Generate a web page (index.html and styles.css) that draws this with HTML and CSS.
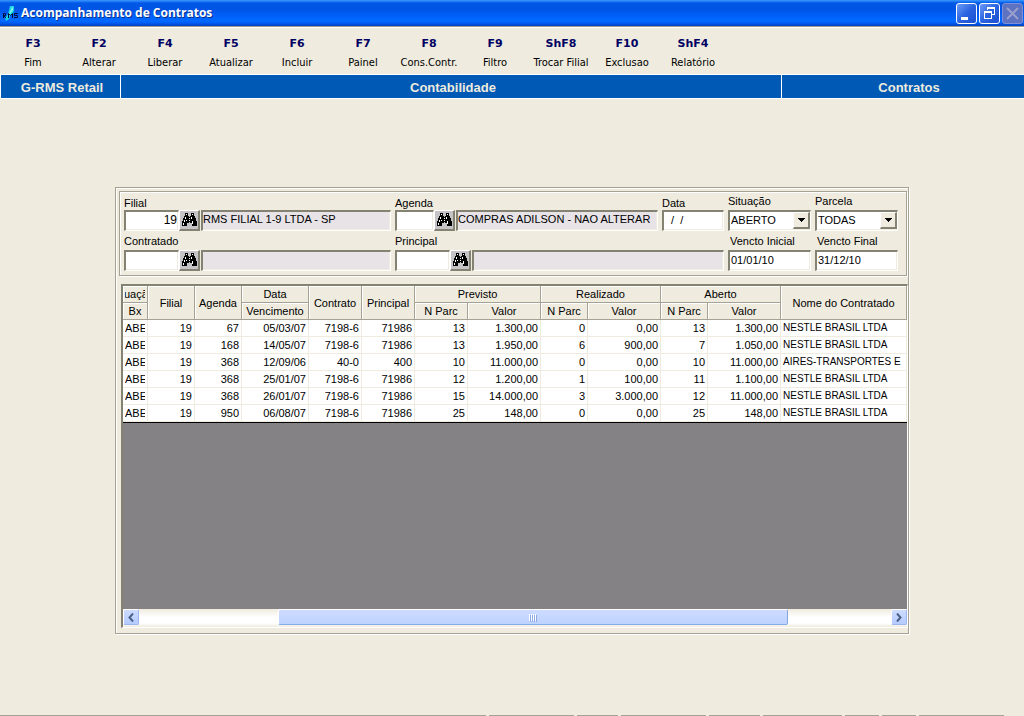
FILE: index.html
```html
<!DOCTYPE html>
<html lang="pt-BR">
<head>
<meta charset="utf-8">
<title>Acompanhamento de Contratos</title>
<link rel="stylesheet" href="styles.css">
</head>
<body>
<svg class="defs" aria-hidden="true">
  <symbol id="find" viewBox="0 0 16 14">
    <path fill="#000" d="M4 0h3v3h1v1h1V3h1V0h3v3h1v2h1v3h1v5h-5v-3H9V9H8v1H6v3H1V8h1V5h1V3h1z"/>
    <path fill="#fff" d="M5 1h1v1H5zM11 1h1v1h-1zM4 4h1v2H4zM10 4h1v2h-1zM3 7h1v2H3zM8 5h1v1H8zM11 8h1v3h-1zM2 10h1v2H2zM5 7h1v1H5zM8 7h1v1H8z"/>
  </symbol>
  <symbol id="drop" viewBox="0 0 7 4"><path d="M0 0h7v1H6v1H5v1H4v1H3V3H2V2H1V1H0z"/></symbol>
</svg>

<header class="titlebar">
  <svg class="logo" viewBox="0 0 17 15" aria-hidden="true">
    <path fill="#19d3e0" d="M8 0h4v4l-1 4-3 2-1 3-3 2-1-3 3-4z"/>
    <path fill="#7df3ee" d="M10 1h1v3L8 8H7z"/>
    <path fill="none" stroke="#001040" d="M1.500 12V7.500h2v2h-2l2.500 2.500M6.500 12V7.500l2 2 2-2V12M16 7.500h-3.500v2h3v2H12"/>
  </svg>
  <h1 class="title">Acompanhamento de Contratos</h1>
  <button class="win" aria-label="Minimizar"><svg viewBox="0 0 19 19"><path fill="#fff" d="M4 13h7v3H4z"/></svg></button>
  <button class="win" aria-label="Restaurar"><svg viewBox="0 0 19 19"><path fill="#fff" d="M7 3h8v8h-3v-1h2V5H8v1H7zM4 7h8v8H4zM5 9v5h6V9z" fill-rule="evenodd"/></svg></button>
  <button class="win off" aria-label="Fechar" disabled><svg viewBox="0 0 19 19"><path stroke="#9a9fcb" stroke-width="2" d="M4 4l11 11M15 4L4 15"/></svg></button>
</header>

<nav class="toolbar">
  <button class="tool"><b>F3</b><span>Fim</span></button>
  <button class="tool"><b>F2</b><span>Alterar</span></button>
  <button class="tool"><b>F4</b><span>Liberar</span></button>
  <button class="tool"><b>F5</b><span>Atualizar</span></button>
  <button class="tool"><b>F6</b><span>Incluir</span></button>
  <button class="tool"><b>F7</b><span>Painel</span></button>
  <button class="tool"><b>F8</b><span>Cons.Contr.</span></button>
  <button class="tool"><b>F9</b><span>Filtro</span></button>
  <button class="tool"><b>ShF8</b><span>Trocar Filial</span></button>
  <button class="tool"><b>F10</b><span>Exclusao</span></button>
  <button class="tool"><b>ShF4</b><span>Relatório</span></button>
</nav>

<div class="band">
  <div class="band-cell">G-RMS Retail</div>
  <div class="band-cell">Contabilidade</div>
  <div class="band-cell">Contratos</div>
</div>

<main class="main">
  <section class="panel">
    <form class="filter">
      <div class="field">
        <label for="filial">Filial</label>
        <div class="line"><input class="box code num" id="filial" value="19"><button type="button" class="find" aria-label="Buscar filial"><svg><use href="#find"/></svg></button><input class="box name" value="RMS FILIAL 1-9 LTDA - SP" aria-label="Nome da filial" readonly></div>
      </div>
      <div class="field">
        <label for="agenda">Agenda</label>
        <div class="line"><input class="box short" id="agenda"><button type="button" class="find" aria-label="Buscar agenda"><svg><use href="#find"/></svg></button><input class="box name" value="COMPRAS ADILSON - NAO ALTERAR" aria-label="Nome da agenda" readonly></div>
      </div>
      <div class="field">
        <label for="data">Data</label>
        <div class="line"><input class="box date" id="data" value="  /  /"></div>
      </div>
      <div class="field">
        <label class="high" for="situacao">Situação</label>
        <div class="line combo"><select class="box" id="situacao"><option>ABERTO</option></select><span class="arrow"><svg><use href="#drop"/></svg></span></div>
      </div>
      <div class="field">
        <label class="high" for="parcela">Parcela</label>
        <div class="line combo"><select class="box" id="parcela"><option>TODAS</option></select><span class="arrow"><svg><use href="#drop"/></svg></span></div>
      </div>
      <div class="field">
        <label class="high" for="contratado">Contratado</label>
        <div class="line"><input class="box code" id="contratado"><button type="button" class="find" aria-label="Buscar contratado"><svg><use href="#find"/></svg></button><input class="box name" aria-label="Nome do contratado" readonly></div>
      </div>
      <div class="field wide">
        <label class="high" for="principal">Principal</label>
        <div class="line"><input class="box code" id="principal"><button type="button" class="find" aria-label="Buscar principal"><svg><use href="#find"/></svg></button><input class="box name" aria-label="Nome do principal" readonly></div>
      </div>
      <div class="field">
        <label class="high inset" for="vini">Vencto Inicial</label>
        <div class="line"><input class="box" id="vini" value="01/01/10"></div>
      </div>
      <div class="field">
        <label class="high inset" for="vfim">Vencto Final</label>
        <div class="line"><input class="box" id="vfim" value="31/12/10"></div>
      </div>
    </form>

    <div class="grid">
      <table class="table">
        <colgroup><col class="w25"><col class="w47"><col class="w47"><col class="w67"><col class="w53"><col class="w53"><col class="w53"><col class="w73"><col class="w47"><col class="w73"><col class="w47"><col class="w73"><col></colgroup>
        <thead>
          <tr><th><div class="clip mid">Situação</div></th><th rowspan="2">Filial</th><th rowspan="2">Agenda</th><th>Data</th><th rowspan="2">Contrato</th><th rowspan="2">Principal</th><th colspan="2">Previsto</th><th colspan="2">Realizado</th><th colspan="2">Aberto</th><th rowspan="2">Nome do Contratado</th></tr>
          <tr><th>Bx</th><th>Vencimento</th><th>N Parc</th><th>Valor</th><th>N Parc</th><th>Valor</th><th>N Parc</th><th>Valor</th></tr>
        </thead>
        <tbody>
          <tr><td><div class="clip">ABERTO</div></td><td>19</td><td>67</td><td>05/03/07</td><td>7198-6</td><td>71986</td><td>13</td><td>1.300,00</td><td>0</td><td>0,00</td><td>13</td><td>1.300,00</td><td class="who">NESTLE BRASIL LTDA</td></tr>
          <tr><td><div class="clip">ABERTO</div></td><td>19</td><td>168</td><td>14/05/07</td><td>7198-6</td><td>71986</td><td>13</td><td>1.950,00</td><td>6</td><td>900,00</td><td>7</td><td>1.050,00</td><td class="who">NESTLE BRASIL LTDA</td></tr>
          <tr><td><div class="clip">ABERTO</div></td><td>19</td><td>368</td><td>12/09/06</td><td>40-0</td><td>400</td><td>10</td><td>11.000,00</td><td>0</td><td>0,00</td><td>10</td><td>11.000,00</td><td class="who">AIRES-TRANSPORTES E</td></tr>
          <tr><td><div class="clip">ABERTO</div></td><td>19</td><td>368</td><td>25/01/07</td><td>7198-6</td><td>71986</td><td>12</td><td>1.200,00</td><td>1</td><td>100,00</td><td>11</td><td>1.100,00</td><td class="who">NESTLE BRASIL LTDA</td></tr>
          <tr><td><div class="clip">ABERTO</div></td><td>19</td><td>368</td><td>26/01/07</td><td>7198-6</td><td>71986</td><td>15</td><td>14.000,00</td><td>3</td><td>3.000,00</td><td>12</td><td>11.000,00</td><td class="who">NESTLE BRASIL LTDA</td></tr>
          <tr><td><div class="clip">ABERTO</div></td><td>19</td><td>950</td><td>06/08/07</td><td>7198-6</td><td>71986</td><td>25</td><td>148,00</td><td>0</td><td>0,00</td><td>25</td><td>148,00</td><td class="who">NESTLE BRASIL LTDA</td></tr>
        </tbody>
      </table>
      <div class="void"></div>
      <div class="scroll">
        <button class="step" aria-label="Rolar para a esquerda"><svg viewBox="0 0 6 9"><path d="M5 .5L1.500 4.500 5 8.500"/></svg></button>
        <div class="before"></div>
        <div class="thumb"><i></i><i></i><i></i><i></i></div>
        <div class="after"></div>
        <button class="step" aria-label="Rolar para a direita"><svg viewBox="0 0 6 9"><path d="M1 .5l3.500 4L1 8.500"/></svg></button>
      </div>
    </div>
  </section>
</main>

<footer class="status"><i class="s-main"></i><i class="s85"></i><i class="s41"></i><i class="s85"></i><i class="s51"></i><i class="s79"></i><i class="s34"></i><i class="s34"></i><i class="s85"></i></footer>
</body>
</html>
```

FILE: styles.css
```css
* { box-sizing: border-box; }

body {
  margin: 0;
  min-height: 100vh;
  display: flex;
  flex-direction: column;
  background: #efebde;
  color: #000;
  font: 11px/14px "Liberation Sans", Arial, sans-serif;
}

button, input, select { font: inherit; color: inherit; margin: 0; border-radius: 0; }
.defs { position: absolute; width: 0; height: 0; }

/* Title bar */
.titlebar {
  display: flex;
  align-items: center;
  gap: 2px;
  height: 27px;
  padding: 0 1px 0 2px;
  border-bottom: 1px solid #9c9a8c;
  background: linear-gradient(#3a93ff 0, #2a86fa 1px, #0058e6 3px, #0054e3 9px, #0060fb 16px, #006aff 21px, #005cf5 23px, #0040c0 26px);
}
.logo { width: 17px; height: 15px; }
.title {
  flex: 1;
  margin: 0;
  color: #fff;
  font: bold 12px/16px "Open Sans", "Liberation Sans", sans-serif;
  text-shadow: 1px 1px 0 #0a2f8c;
}
.win {
  width: 21px;
  height: 21px;
  padding: 0;
  border: 1px solid #fff;
  border-radius: 3px;
  background: linear-gradient(135deg, #6c9cf8, #2a63e0 50%, #1c50d0);
}
.win svg { display: block; width: 19px; height: 19px; }
.win.off { border-color: #7d8fd8; background: #5d72c0; }

/* Function keys */
.toolbar {
  display: flex;
  height: 47px;
  border-top: 1px solid #fff;
}
.tool {
  width: 66px;
  padding: 9px 0 0;
  border: 0;
  background: none;
  display: flex;
  flex-direction: column;
  align-items: center;
  gap: 5px;
  white-space: nowrap;
}
.tool b { color: #000063; font: bold 11px/14px "DejaVu Sans", sans-serif; }
.tool span { font: 11px/14px "DejaVu Sans Condensed", "Liberation Sans", sans-serif; }

/* Module band */
.band {
  display: grid;
  grid-template-columns: 121px 661px 1fr;
  border: solid #fff;
  border-width: 1px 0;
  background: #005ab5;
}
.band-cell {
  height: 23px;
  border-right: 1px solid #fff;
  color: #efebde;
  font: bold 13px/25px "Liberation Sans", Arial, sans-serif;
  text-align: center;
}
.band-cell:first-child { border-left: 1px solid #fff; padding-left: 3px; }
.band-cell:nth-child(2) { padding-left: 4px; }
.band-cell:last-child { border-right: 0; padding-left: 12px; }

/* Framed panel */
.main { flex: 1; padding: 88px 24px 24px; }
.panel {
  max-width: 794px;
  margin: 0 auto;
  padding: 3px 0 5px 3px;
  border: 1px solid #a5a294;
  box-shadow: inset 1px 1px 0 #fff, 1px 1px 0 #fff;
}
.filter {
  display: grid;
  grid-template-columns: 267fr 263fr 62px 83px 83px;
  gap: 5px 4px;
  margin: 0 1px 8px 0;
  padding: 4px 8px 4px 4px;
  border: 1px solid #a5a294;
  box-shadow: inset 1px 1px 0 #fff, 1px 1px 0 #fff;
}
.field { min-width: 0; }
.wide { grid-column: span 2; }
.field label { display: block; height: 14px; }
.field label.high { line-height: 10px; }
.field label.inset { padding-left: 2px; }
.line { display: flex; height: 21px; }
.box {
  flex: 1;
  min-width: 0;
  width: 100%;
  height: 21px;
  padding: 0 1px 2px;
  border: solid;
  border-width: 2px 1px 1px 2px;
  border-color: #848273 #fff #fff #848273;
  background: #fff;
  box-shadow: inset -1px -1px 0 #efebde;
  outline: 0;
}
.code { flex: none; width: 55px; }
.short { flex: none; width: 39px; }
.num { font-size: 12px; text-align: right; }
.name { background: #e7e3e7; padding: 0 0 4px; }
.find {
  flex: none;
  width: 21px;
  margin-right: 1px;
  padding: 0;
  display: flex;
  align-items: center;
  justify-content: center;
  border: solid;
  border-width: 1px 2px 2px 1px;
  border-color: #fff #848273 #848273 #fff;
  background: #c6c3c6;
}
.find svg { width: 16px; height: 14px; }
.combo { position: relative; }
.combo select { appearance: none; }
.arrow {
  position: absolute;
  top: 2px;
  right: 1px;
  width: 17px;
  height: 17px;
  display: flex;
  align-items: center;
  justify-content: center;
  border: solid;
  border-width: 1px 2px 2px 1px;
  border-color: #fff #848273 #848273 #fff;
  background: #efebde;
  pointer-events: none;
}
.arrow svg { width: 7px; height: 4px; }

/* Contract grid */
.grid {
  margin-left: 2px;
  border: solid;
  border-width: 2px 1px 1px 2px;
  border-color: #848273 #fff #fff #848273;
}
.table {
  width: 100%;
  table-layout: fixed;
  border-collapse: separate;
  border-spacing: 0;
  border-bottom: 1px solid #000;
  background: #fff;
}
.w25 { width: 25px; }
.w47 { width: 47px; }
.w53 { width: 53px; }
.w67 { width: 67px; }
.w73 { width: 73px; }
.table th, .table td {
  height: 17px;
  padding: 0 2px;
  line-height: 16px;
  border: solid #efebde;
  border-width: 0 1px 1px 0;
  white-space: nowrap;
  overflow: hidden;
}
.table th {
  padding: 0;
  font-weight: normal;
  background: #efebde;
  border-color: #a5a294;
  box-shadow: inset 1px 1px 0 #fff;
}
.table td { text-align: right; }
.table td.who { text-align: left; font-size: 10px; }
.clip { width: 20px; margin: 0 auto; overflow: hidden; text-align: left; }
.clip.mid { display: flex; justify-content: center; padding-right: 5px; }
.void { height: 186px; background: #848284; }

/* Horizontal scroll bar */
.scroll {
  display: flex;
  height: 18px;
  padding: 0 0 2px;
  background: linear-gradient(#efebde, #fff 8px, #fff 14px, #efebde);
}
.step {
  width: 16px;
  height: 16px;
  padding: 0;
  display: flex;
  align-items: center;
  justify-content: center;
  border: 1px solid #fff;
  border-bottom-color: #9cb6ee;
  border-right-color: #9cb6ee;
  border-radius: 2px;
  background: linear-gradient(#cedbff, #b5cbff);
}
.step svg { width: 6px; height: 9px; }
.step path { fill: none; stroke: #4a6184; stroke-width: 2; }
.before { flex: 139; }
.after { flex: 103; }
.thumb {
  flex: 510;
  display: flex;
  align-items: center;
  justify-content: center;
  gap: 1px;
  border: 1px solid #fff;
  border-right-color: #84a6de;
  border-bottom-color: #84aae7;
  border-radius: 2px;
  background: linear-gradient(#cedbff, #bdd3ff);
}
.thumb i { width: 1px; height: 7px; background: #fff; box-shadow: 1px 1px 0 #8caae7; }

/* Status bar edge */
.status { display: flex; gap: 3px; height: 1px; padding-right: 20px; }
.status i { height: 1px; background: #a5a294; }
.s-main { flex: 1; }
.s34 { width: 34px; }
.s41 { width: 41px; }
.s51 { width: 51px; }
.s79 { width: 79px; }
.s85 { width: 85px; }
```
